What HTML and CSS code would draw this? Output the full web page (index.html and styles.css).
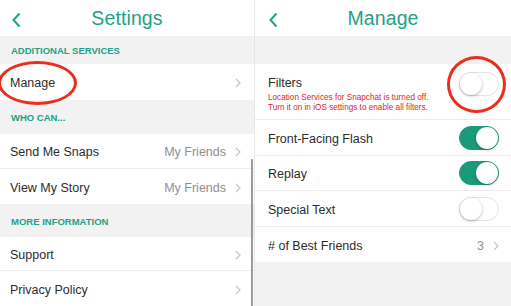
FILE: index.html
```html
<!DOCTYPE html>
<html lang="en">
<head>
    <meta charset="UTF-8">
    <meta name="viewport" content="width=device-width, initial-scale=1.0">
    <title>Settings / Manage</title>
    <link rel="stylesheet" href="styles.css">
</head>
<body>
    <div class="screen screen-left">
        <div class="nav">
            <svg class="back" width="9" height="16" viewBox="0 0 9 16"><path d="M7.5 1.5 L1.5 8 L7.5 14.5" fill="none" stroke="currentColor" stroke-width="2"/></svg>
            <h1 class="nav-title">Settings</h1>
        </div>

        <div class="section-header h-28">ADDITIONAL SERVICES</div>
        <div class="row h-36">
            <span class="label">Manage</span>
            <span class="chevron"><svg width="6" height="10" viewBox="0 0 6 10"><path d="M1 1 L5 5 L1 9" fill="none" stroke="currentColor" stroke-width="1.2"/></svg></span>
        </div>

        <div class="section-header h-34">WHO CAN...</div>
        <div class="row h-35 divided">
            <span class="label">Send Me Snaps</span>
            <span class="value">My Friends</span>
            <span class="chevron"><svg width="6" height="10" viewBox="0 0 6 10"><path d="M1 1 L5 5 L1 9" fill="none" stroke="currentColor" stroke-width="1.2"/></svg></span>
        </div>
        <div class="row h-35">
            <span class="label">View My Story</span>
            <span class="value">My Friends</span>
            <span class="chevron"><svg width="6" height="10" viewBox="0 0 6 10"><path d="M1 1 L5 5 L1 9" fill="none" stroke="currentColor" stroke-width="1.2"/></svg></span>
        </div>

        <div class="section-header h-33">MORE INFORMATION</div>
        <div class="row h-34 divided">
            <span class="label">Support</span>
            <span class="chevron"><svg width="6" height="10" viewBox="0 0 6 10"><path d="M1 1 L5 5 L1 9" fill="none" stroke="currentColor" stroke-width="1.2"/></svg></span>
        </div>
        <div class="row h-35">
            <span class="label">Privacy Policy</span>
            <span class="chevron"><svg width="6" height="10" viewBox="0 0 6 10"><path d="M1 1 L5 5 L1 9" fill="none" stroke="currentColor" stroke-width="1.2"/></svg></span>
        </div>

        <div class="scrollbar"></div>
        <div class="circle circle-manage"></div>
    </div>

    <div class="screen screen-right">
        <div class="nav">
            <svg class="back" width="9" height="16" viewBox="0 0 9 16"><path d="M7.5 1.5 L1.5 8 L7.5 14.5" fill="none" stroke="currentColor" stroke-width="2"/></svg>
            <h1 class="nav-title">Manage</h1>
        </div>

        <div class="section-header h-28"></div>

        <div class="row row-filters divided">
            <div class="filters-text">
                <div class="label">Filters</div>
                <div class="note">Location Services for Snapchat is turned off.<br>Turn it on in iOS settings to enable all filters.</div>
            </div>
            <span class="toggle"></span>
        </div>
        <div class="row h-36 divided">
            <span class="label">Front-Facing Flash</span>
            <span class="toggle on"></span>
        </div>
        <div class="row h-35 divided">
            <span class="label">Replay</span>
            <span class="toggle on"></span>
        </div>
        <div class="row h-36 divided">
            <span class="label">Special Text</span>
            <span class="toggle"></span>
        </div>
        <div class="row h-35">
            <span class="label"># of Best Friends</span>
            <span class="value">3</span>
            <span class="chevron"><svg width="6" height="10" viewBox="0 0 6 10"><path d="M1 1 L5 5 L1 9" fill="none" stroke="currentColor" stroke-width="1.2"/></svg></span>
        </div>

        <div class="circle circle-filters"></div>
    </div>
</body>
</html>
```

FILE: styles.css
```css
* {
    margin: 0;
    padding: 0;
    box-sizing: border-box;
}

body {
    width: 511px;
    height: 306px;
    overflow: hidden;
    display: flex;
    gap: 1px;
    background: #e6e6e6;
    font-family: 'Liberation Sans', Arial, sans-serif;
    color: #2b2b2b;
}

.screen {
    position: relative;
    height: 306px;
    overflow: hidden;
    display: flex;
    flex-direction: column;
    background: #f2f2f2;
}

.screen-left {
    width: 254px;
}

.screen-right {
    width: 256px;
}

/* nav bar */
.nav {
    height: 36px;
    flex-shrink: 0;
    display: flex;
    align-items: center;
    justify-content: center;
    position: relative;
    background: #fff;
    color: #1fa186;
}

.nav .back {
    position: absolute;
    left: 12px;
    top: 12px;
}

.screen-right .nav .back {
    left: 14px;
}

.nav-title {
    font-size: 19.5px;
    font-weight: normal;
    letter-spacing: 0.1px;
}

/* lists */
.section-header {
    flex-shrink: 0;
    display: flex;
    align-items: center;
    padding: 1px 0 0 11px;
    font-size: 9.5px;
    font-weight: bold;
    color: #1fa186;
    background: #f2f2f2;
}

.row {
    flex-shrink: 0;
    display: flex;
    align-items: center;
    padding: 2px 13px 0 10px;
    background: #fff;
    font-size: 12.5px;
}

.row.divided {
    border-bottom: 1px solid #ececec;
}

.screen-right .row {
    padding-left: 13px;
    padding-right: 12px;
}

.h-28 { height: 28px; }
.h-33 { height: 33px; }
.h-34 { height: 34px; }
.h-35 { height: 35px; }
.h-36 { height: 36px; }

.label {
    flex: 1;
}

.value {
    color: #8e8e93;
    margin-right: 9px;
}

.chevron {
    display: flex;
    color: #c4c4c8;
}

/* filters */
.screen-right .row-filters {
    height: 56px;
    align-items: flex-start;
    padding-top: 11px;
}

.filters-text {
    flex: 1;
}

.filters-text .label {
    line-height: 16px;
}

.note {
    margin-top: 2px;
    font-size: 8.2px;
    line-height: 9.5px;
    color: #d8262c;
}

.row-filters .toggle {
    margin-top: -3px;
}

/* switches */
.toggle {
    width: 40px;
    height: 24px;
    border-radius: 12px;
    border: 1px solid #e4e4e4;
    background: #fff;
    position: relative;
    flex-shrink: 0;
    margin-top: -2px;
}

.toggle::after {
    content: '';
    position: absolute;
    top: 0;
    left: 0;
    width: 22px;
    height: 22px;
    border-radius: 50%;
    background: #fff;
    box-shadow: 0 1px 3px rgba(0, 0, 0, 0.3);
}

.toggle.on {
    background: #1b9a7b;
    border-color: #1b9a7b;
}

.toggle.on::after {
    left: 16px;
}

/* overlays */
.scrollbar {
    position: absolute;
    left: 251px;
    top: 159px;
    width: 2px;
    height: 150px;
    border-radius: 1px;
    background: #9a9a9a;
}

.circle {
    position: absolute;
    border: 3px solid #e8301e;
    border-radius: 50%;
}

.circle-manage {
    left: -2px;
    top: 61px;
    width: 79px;
    height: 44px;
}

.circle-filters {
    left: 192px;
    top: 56px;
    width: 59px;
    height: 57px;
}
```
